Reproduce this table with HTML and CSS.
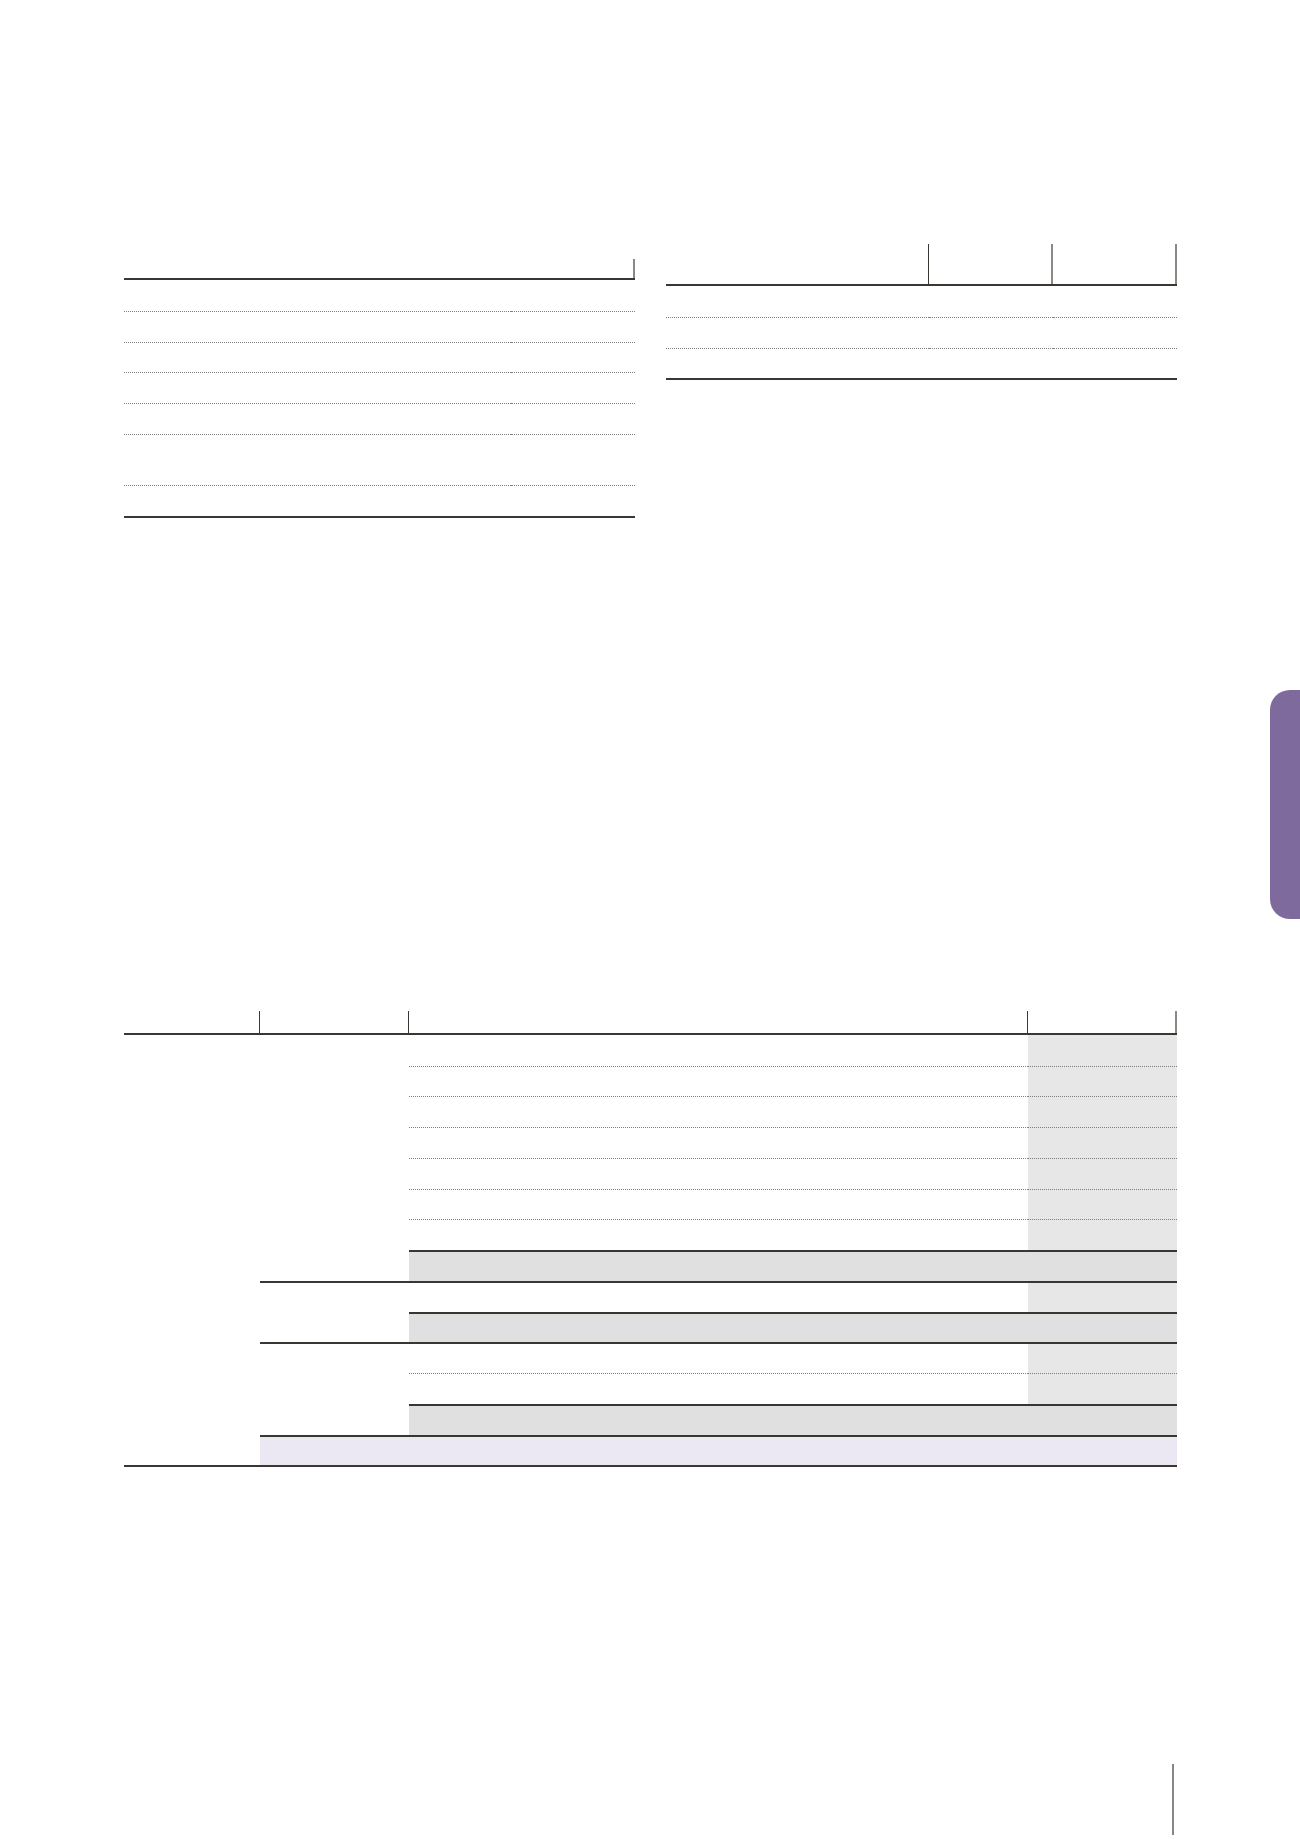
FILE: index.html
```html
<!DOCTYPE html>
<html lang="en">
<head>
<meta charset="utf-8">
<title>Report page</title>
<link rel="stylesheet" href="styles.css">
</head>
<body>
<div class="page">
  <div class="top">
    <div class="tbl tbl-a">
      <div class="thead">
        <div class="th"></div>
        <div class="th edge"></div>
      </div>
      <div class="tbody">
        <div class="td"></div><div class="td"></div>
        <div class="td dot"></div><div class="td dot"></div>
        <div class="td dot"></div><div class="td dot"></div>
        <div class="td dot"></div><div class="td dot"></div>
        <div class="td dot"></div><div class="td dot"></div>
        <div class="td dot"></div><div class="td dot"></div>
        <div class="td dot"></div><div class="td dot"></div>
      </div>
    </div>
    <div class="tbl tbl-b">
      <div class="thead">
        <div class="th v"></div>
        <div class="th edge"></div>
        <div class="th edge"></div>
      </div>
      <div class="tbody">
        <div class="td"></div><div class="td"></div><div class="td"></div>
        <div class="td dot"></div><div class="td dot"></div><div class="td dot"></div>
        <div class="td dot"></div><div class="td dot"></div><div class="td dot"></div>
      </div>
    </div>
  </div>

  <div class="mid">
    <div class="tab"></div>
  </div>

  <div class="tbl tbl-c">
    <div class="thead">
      <div class="th v"></div>
      <div class="th v"></div>
      <div class="th v"></div>
      <div class="th edge"></div>
    </div>
    <div class="tbody">
      <div class="td c1"></div>
      <div class="td c2a"></div>
      <div class="td c2b solid"></div>
      <div class="td c2c solid"></div>
      <div class="td total solid"></div>

      <div class="td k3"></div><div class="td k4 shade"></div>
      <div class="td k3 dot"></div><div class="td k4 dot shade"></div>
      <div class="td k3 dot"></div><div class="td k4 dot shade"></div>
      <div class="td k3 dot"></div><div class="td k4 dot shade"></div>
      <div class="td k3 dot"></div><div class="td k4 dot shade"></div>
      <div class="td k3 dot"></div><div class="td k4 dot shade"></div>
      <div class="td k3 dot"></div><div class="td k4 dot shade"></div>
      <div class="td k3 solid sub"></div><div class="td k4 solid sub"></div>
      <div class="td k3 solid"></div><div class="td k4 solid shade"></div>
      <div class="td k3 solid sub"></div><div class="td k4 solid sub"></div>
      <div class="td k3 solid"></div><div class="td k4 solid shade"></div>
      <div class="td k3 dot"></div><div class="td k4 dot shade"></div>
      <div class="td k3 solid sub"></div><div class="td k4 solid sub"></div>
    </div>
  </div>

  <div class="foot">
    <div class="folio"></div>
  </div>
</div>
</body>
</html>
```

FILE: styles.css
```css
html, body {
  margin: 0;
  padding: 0;
  background: #ffffff;
  font-family: "Liberation Sans", Arial, sans-serif;
  color: #3a3631;
}

.page {
  width: 1300px;
  padding-top: 244px;
}

.top {
  display: flex;
  align-items: flex-start;
  gap: 31px;
  margin-left: 124px;
  width: 1053px;
}

.tbl {
  border-bottom: 2px solid #3a3631;
}

.thead {
  display: grid;
  box-sizing: border-box;
  border-bottom: 2px solid #3a3631;
}

.th {
  box-sizing: border-box;
}

.th.v {
  border-right: 1px solid #3a3631;
}

.th.edge {
  border-right: 2px solid #8c8883;
}

.tbody {
  display: grid;
}

.td {
  box-sizing: border-box;
}

.dot {
  border-top: 1px dotted #7e7e7c;
}

.solid {
  border-top: 2px solid #3a3631;
}

/* left upper table */
.tbl-a {
  width: 511px;
  margin-top: 15px;
}

.tbl-a .thead,
.tbl-a .tbody {
  grid-template-columns: 387px 124px;
}

.tbl-a .thead {
  height: 21px;
}

.tbl-a .tbody {
  grid-template-rows: 30.8px 30.8px 30.8px 30.8px 30.8px 51px 30.8px;
}

/* right upper table */
.tbl-b {
  width: 511px;
}

.tbl-b .thead,
.tbl-b .tbody {
  grid-template-columns: 263px 124px 124px;
}

.tbl-b .thead {
  height: 42px;
}

.tbl-b .tbody {
  grid-template-rows: repeat(3, 30.8px);
}

/* side tab */
.mid {
  display: flex;
  justify-content: flex-end;
  padding-top: 172px;
  padding-bottom: 92px;
}

.tab {
  width: 30px;
  height: 229px;
  background: #7f6a9e;
  border-radius: 20px 0 0 20px;
}

/* lower table */
.tbl-c {
  margin-left: 124px;
  width: 1053px;
}

.tbl-c .thead,
.tbl-c .tbody {
  grid-template-columns: 136px 149px 619px 149px;
}

.tbl-c .thead {
  height: 24px;
}

.tbl-c .tbody {
  grid-template-rows: repeat(14, 30.75px);
}

.c1 {
  grid-column: 1;
  grid-row: 1 / span 14;
}

.c2a {
  grid-column: 2;
  grid-row: 1 / span 8;
}

.c2b {
  grid-column: 2;
  grid-row: 9 / span 2;
}

.c2c {
  grid-column: 2;
  grid-row: 11 / span 3;
}

.total {
  grid-column: 2 / span 3;
  grid-row: 14;
  background: #ebe8f3;
}

.k3 {
  grid-column: 3;
}

.k4 {
  grid-column: 4;
}

.shade {
  background: #e6e7e6;
}

.sub {
  background: #e0e0e0;
}

/* folio rule */
.foot {
  display: flex;
  justify-content: flex-end;
  margin-left: 124px;
  width: 1053px;
  margin-top: 297px;
}

.folio {
  width: 2px;
  height: 71px;
  margin-right: 3px;
  background: #8a8681;
}
```
